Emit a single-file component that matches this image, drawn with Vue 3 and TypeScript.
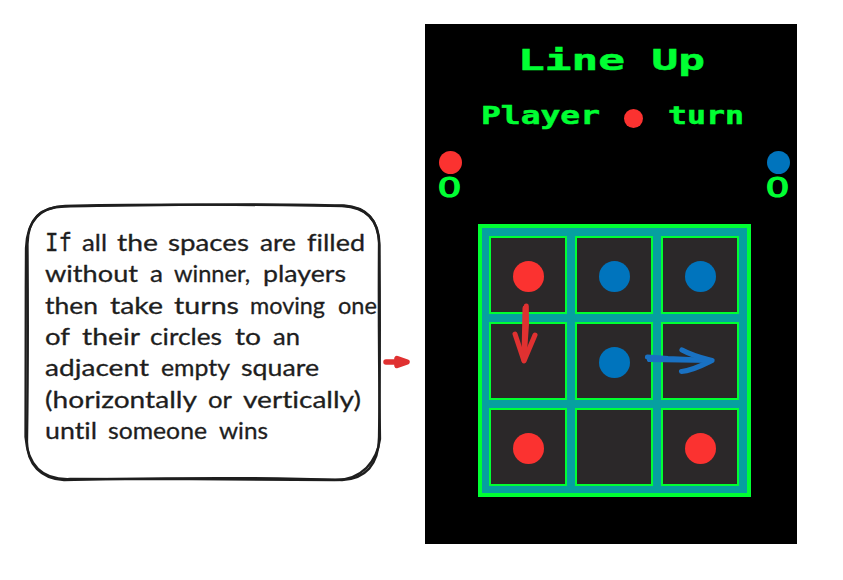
<script setup lang="ts">
type Piece = 'red' | 'blue' | null
type Word = [text: string, x: number, width: number]

const board: Piece[] = ['red', 'blue', 'blue', null, 'blue', null, 'red', null, 'red']

const note: Word[][] = [
  [['If', 0, 27], ['all', 37, 25], ['the', 72, 41], ['spaces', 123, 81], ['are', 215, 36], ['filled', 262, 58]],
  [['without', 0, 93], ['a', 105, 13], ['winner,', 129, 76], ['players', 218, 83]],
  [['then', 0, 53], ['take', 65, 53], ['turns', 129, 65], ['moving', 205, 75], ['one', 293, 39]],
  [['of', 0, 25], ['their', 37, 58], ['circles', 105, 72], ['to', 190, 26], ['an', 228, 27]],
  [['adjacent', 0, 104], ['empty', 116, 69], ['square', 196, 78]],
  [['(horizontally', 0, 152], ['or', 163, 24], ['vertically)', 198, 118]],
  [['until', 0, 52], ['someone', 63, 99], ['wins', 174, 49]],
]
</script>

<template>
  <main class="canvas">
    <section class="note">
      <svg class="frame" viewBox="0 0 362 286" fill="none">
        <path d="M44 6 C130 3 240 5 321 6 C346 7 358 20 358.500 45 C359 110 359 175 358 237 C358 265 344 279 321 280 C240 277 130 278 43 280 C20 279 6 264 6 242 C7 175 7 110 6.500 44 C7 18 20 7 44 6Z" />
        <path d="M43 6.500 C130 5 230 2.500 323 5.500 C343 7 357 17 358 43 C357.500 110 358 170 359 239 C356 261 341 280 314 280 C240 279 130 279 49 279 C22 280 7 266 4.500 237 C5 170 4.500 110 5 48 C6 22 18 7 43 6.500Z" />
      </svg>
      <svg class="note-text" viewBox="0 0 336 226">
        <text v-for="(line, i) in note" :key="i" :y="24 + i * 31.3">
          <tspan v-for="[text, x, width] in line" :key="x" :x="x" :class="{ capital: text === 'If' }" :textLength="width" lengthAdjust="spacingAndGlyphs">{{ text }}</tspan>
        </text>
      </svg>
    </section>

    <svg class="pointer" viewBox="0 0 28 14">
      <path d="M3 7 H16 M14 3.500 L24 7 L14 10.500 M14 5 L20 7 L14 9" />
    </svg>

    <section class="game">
      <h1>
        <svg viewBox="0 0 190 32"><text x="0" y="24" textLength="187" lengthAdjust="spacingAndGlyphs">Line Up</text></svg>
      </h1>
      <div class="turn">
        <svg class="player" viewBox="0 0 120 30"><text x="0" y="22.500" textLength="119" lengthAdjust="spacingAndGlyphs">Player</text></svg>
        <i class="disc red"></i>
        <svg class="word" viewBox="0 0 80 30"><text x="0" y="22.500" textLength="76" lengthAdjust="spacingAndGlyphs">turn</text></svg>
      </div>
      <div class="scores">
        <div class="score">
          <i class="disc red"></i>
          <svg viewBox="0 0 24 24"><text x="-1.500" y="20.500" textLength="24" lengthAdjust="spacingAndGlyphs">0</text></svg>
        </div>
        <div class="score">
          <i class="disc blue"></i>
          <svg viewBox="0 0 24 24"><text x="-1.500" y="20.500" textLength="24" lengthAdjust="spacingAndGlyphs">0</text></svg>
        </div>
      </div>
      <div class="board">
        <div v-for="(piece, i) in board" :key="i" class="cell">
          <i v-if="piece" class="disc" :class="piece"></i>
        </div>
        <svg class="moves" viewBox="0 0 273 273">
          <g class="down">
            <path d="M48.300 82 L48.500 100 L46 136 M47 84 L46 132" />
            <path d="M37 110 L46 137 L57 111" />
          </g>
          <g class="across">
            <path d="M169.500 133 L190 134.500 L233 136.500 M171.500 135.500 L233 136.500" />
            <path d="M204 126 C215 132 224 134 234 136.500 C225 141 214 147 203.500 147.500" />
          </g>
        </svg>
      </div>
    </section>
  </main>
</template>

<style>
body {
  margin: 0;
  background: #fff;
}
</style>

<style scoped>
.canvas {
  display: flex;
  align-items: flex-start;
  box-sizing: border-box;
  width: 843px;
  height: 580px;
  padding: 24px 0 0 21px;
  overflow: hidden;
}
svg {
  display: block;
  overflow: visible;
}
.note {
  display: grid;
  flex: none;
  width: 362px;
  height: 286px;
  margin-top: 176px;
}
.frame,
.note-text {
  grid-area: 1 / 1;
}
.frame {
  width: 362px;
  height: 286px;
  stroke: #1e1e1e;
  stroke-width: 2.3;
}
.note-text {
  width: 336px;
  height: 226px;
  margin: 27px 0 0 24px;
}
.note-text text {
  font: 24px Lato, sans-serif;
  font-variant-ligatures: none;
  fill: #1e1e1e;
  stroke: #1e1e1e;
  stroke-width: 0.3;
  stroke-linejoin: round;
}
.note-text .capital {
  font-family: "DejaVu Sans Mono", monospace;
}
.pointer {
  flex: none;
  width: 28px;
  height: 14px;
  margin-top: 331px;
  fill: none;
  stroke: #e03131;
  stroke-width: 5.5;
  stroke-linecap: round;
  stroke-linejoin: round;
}
.game {
  flex: none;
  box-sizing: border-box;
  width: 372px;
  height: 520px;
  margin-left: 14px;
  padding-top: 22px;
  background: #000;
}
.game text {
  font-family: "DejaVu Sans Mono", monospace;
  font-weight: 700;
  fill: #00ff33;
  stroke: #00ff33;
  stroke-width: 0.5;
}
h1 {
  margin: 0 0 0 93px;
}
h1 svg {
  width: 190px;
  height: 32px;
}
h1 text {
  font-size: 28.5px;
}
.disc {
  flex: none;
  display: block;
  border-radius: 50%;
}
.red {
  background: #fb3230;
}
.blue {
  background: #0074bd;
}
.turn {
  display: flex;
  align-items: center;
  height: 30px;
  margin: 23px 0 0 56px;
}
.turn text {
  font-size: 25px;
}
.player {
  width: 120px;
  height: 30px;
}
.turn .disc {
  width: 19px;
  height: 19px;
  margin: 5px 25px 0 23px;
}
.word {
  width: 80px;
  height: 30px;
}
.scores {
  display: flex;
  justify-content: space-between;
  margin-top: 20px;
  padding: 0 6px 0 14px;
}
.score .disc {
  width: 23px;
  height: 23px;
}
.score svg {
  width: 24px;
  height: 24px;
  margin-top: 2px;
}
.score text {
  font-family: "DejaVu Sans", sans-serif;
  font-size: 26.5px;
  font-weight: 400;
  stroke-width: 1.2;
}
.board {
  position: relative;
  display: grid;
  grid-template-columns: repeat(3, 78px);
  grid-auto-rows: 78px;
  gap: 8px;
  box-sizing: border-box;
  width: 273px;
  height: 273px;
  margin: 24px 0 0 53px;
  padding: 8px 7px 7px;
  border: 4px solid #00ff33;
  background: #06a0a0;
}
.cell {
  display: flex;
  align-items: center;
  justify-content: center;
  box-sizing: border-box;
  padding-top: 3px;
  border: 2px solid #00ff33;
  background: #2b2829;
}
.cell .disc {
  width: 31px;
  height: 31px;
}
.moves {
  position: absolute;
  top: -4px;
  left: -4px;
  width: 273px;
  height: 273px;
  fill: none;
  stroke-linecap: round;
  stroke-linejoin: round;
}
.down {
  stroke: #e03131;
  stroke-width: 5;
}
.across {
  stroke: #1971c2;
  stroke-width: 5.2;
}
</style>
